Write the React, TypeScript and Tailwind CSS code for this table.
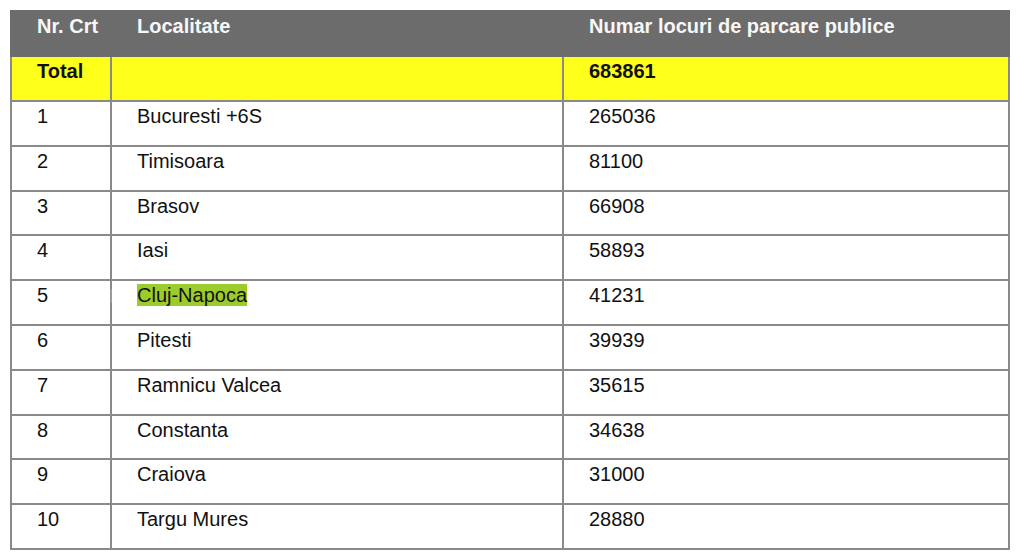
const rows: [string, string, string][] = [
  ['1', 'Bucuresti +6S', '265036'],
  ['2', 'Timisoara', '81100'],
  ['3', 'Brasov', '66908'],
  ['4', 'Iasi', '58893'],
  ['5', 'Cluj-Napoca', '41231'],
  ['6', 'Pitesti', '39939'],
  ['7', 'Ramnicu Valcea', '35615'],
  ['8', 'Constanta', '34638'],
  ['9', 'Craiova', '31000'],
  ['10', 'Targu Mures', '28880'],
];

const cell = 'border-2 border-[#8a8a8a] align-top pl-[25px] pt-[3px] leading-[23px]';
const head = 'border-2 border-[#6c6c6c] align-top pl-[25px] pt-[3px] leading-[23px] text-left font-bold';

export default function App() {
  return (
    <div
      className="min-h-screen bg-white pl-[10px] pt-[10px] text-[20px] text-[#111]"
      style={{ fontFamily: '"Liberation Sans", Arial, sans-serif' }}
    >
      <table className="border-collapse w-[998px] table-fixed">
        <colgroup>
          <col className="w-[100px]" />
          <col className="w-[452px]" />
          <col className="w-[446px]" />
        </colgroup>
        <thead>
          <tr className="h-[45px] bg-[#6c6c6c] text-[#f7f7f7]">
            <th className={head}>Nr. Crt</th>
            <th className={head}>Localitate</th>
            <th className={head}>Numar locuri de parcare publice</th>
          </tr>
        </thead>
        <tbody>
          <tr className="h-[45px] bg-[#ffff1c] font-bold">
            <td className={cell}>Total</td>
            <td className={cell}></td>
            <td className={cell}>683861</td>
          </tr>
          {rows.map(([nr, city, count]) => (
            <tr key={nr} className="h-[44.8px]">
              <td className={cell}>{nr}</td>
              {nr === '5' ? (
                <td className={`${cell} relative border-l-white`}>
                  <span className="absolute left-[-2px] top-[8px] h-[14px] w-[2px] bg-[#9a9a9a]" />
                  <span className="bg-[#9ccc2c]">{city}</span>
                </td>
              ) : (
                <td className={cell}>{city}</td>
              )}
              <td className={cell}>{count}</td>
            </tr>
          ))}
        </tbody>
      </table>
    </div>
  );
}
